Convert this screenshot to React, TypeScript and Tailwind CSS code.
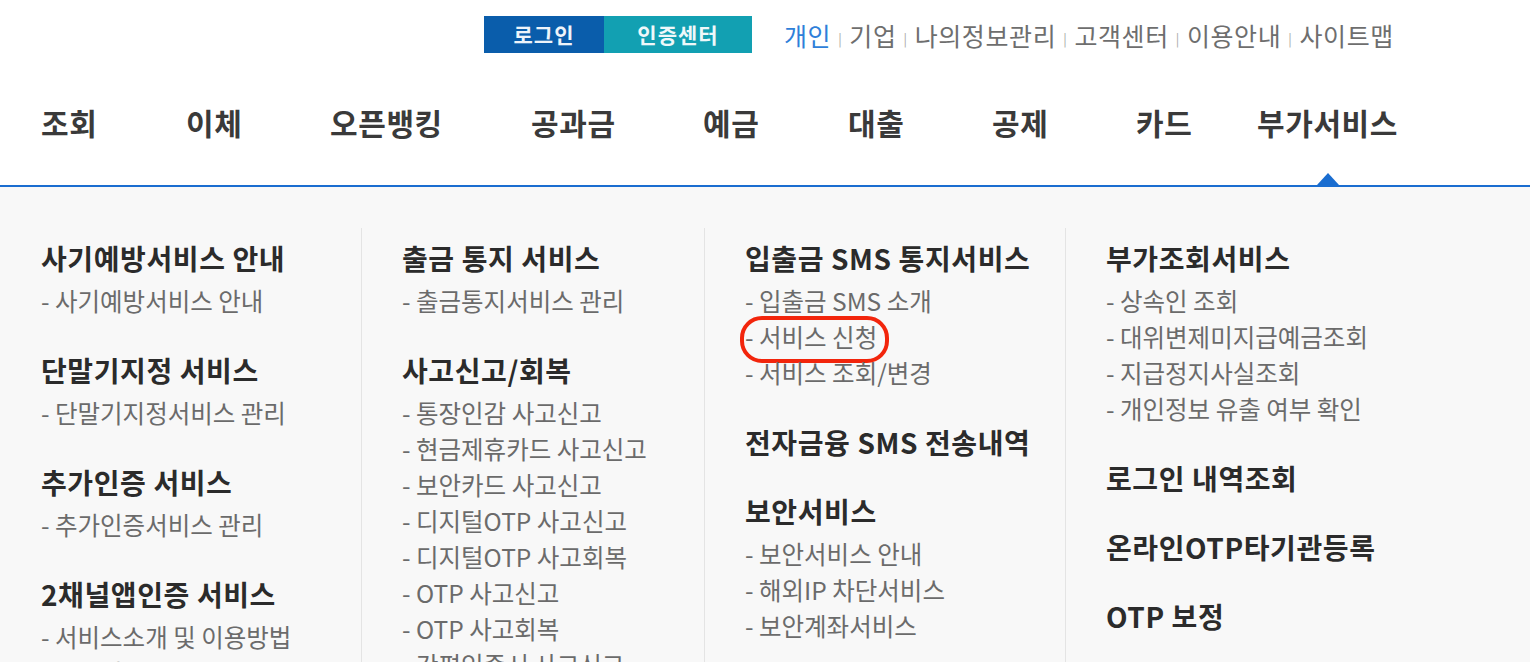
import React from "react";

const FONT = "font-['Noto_Sans_CJK_KR','Noto_Sans',sans-serif]";

type Group = { title: string; items: string[] };

const columns: Group[][] = [
  [
    { title: "사기예방서비스 안내", items: ["사기예방서비스 안내"] },
    { title: "단말기지정 서비스", items: ["단말기지정서비스 관리"] },
    { title: "추가인증 서비스", items: ["추가인증서비스 관리"] },
    { title: "2채널앱인증 서비스", items: ["서비스소개 및 이용방법", "채널인증 앱 및 등록방법"] },
  ],
  [
    { title: "출금 통지 서비스", items: ["출금통지서비스 관리"] },
    {
      title: "사고신고/회복",
      items: [
        "통장인감 사고신고",
        "현금제휴카드 사고신고",
        "보안카드 사고신고",
        "디지털OTP 사고신고",
        "디지털OTP 사고회복",
        "OTP 사고신고",
        "OTP 사고회복",
        "간편인증서 사고신고",
      ],
    },
  ],
  [
    { title: "입출금 SMS 통지서비스", items: ["입출금 SMS 소개", "서비스 신청", "서비스 조회/변경"] },
    { title: "전자금융 SMS 전송내역", items: [] },
    { title: "보안서비스", items: ["보안서비스 안내", "해외IP 차단서비스", "보안계좌서비스"] },
  ],
  [
    {
      title: "부가조회서비스",
      items: ["상속인 조회", "대위변제미지급예금조회", "지급정지사실조회", "개인정보 유출 여부 확인"],
    },
    { title: "로그인 내역조회", items: [] },
    { title: "온라인OTP타기관등록", items: [] },
    { title: "OTP 보정", items: [] },
  ],
];

const navItems: { label: string; w: string }[] = [
  { label: "조회", w: "w-[145px]" },
  { label: "이체", w: "w-[144px]" },
  { label: "오픈뱅킹", w: "w-[201px]" },
  { label: "공과금", w: "w-[172px]" },
  { label: "예금", w: "w-[145px]" },
  { label: "대출", w: "w-[144px]" },
  { label: "공제", w: "w-[144px]" },
  { label: "카드", w: "w-[121px]" },
];

const topLinks = ["기업", "나의정보관리", "고객센터", "이용안내", "사이트맵"];

function Column({ groups, first }: { groups: Group[]; first?: boolean }) {
  return (
    <div className={`${first ? "pl-[41px]" : "pl-[40px] border-l border-[#e4e4e4]"} pt-[12px] flex flex-col`}>
      {groups.map((g, gi) => (
        <div key={gi} className={gi > 0 ? "mt-[33px]" : ""}>
          <div className="text-[28px] leading-[36px] font-bold text-[#2b2b2b] whitespace-nowrap tracking-[0.6px]">
            {g.title}
          </div>
          {g.items.length > 0 && (
            <ul className="mt-[7px]">
              {g.items.map((it, ii) => (
                <li
                  key={ii}
                  className="relative text-[24.5px] leading-[36px] text-[#6b6b6b] whitespace-nowrap"
                >
                  - {it}
                  {it === "서비스 신청" && (
                    <span className="absolute left-[-5px] top-[-3px] w-[149px] h-[47px] rounded-[22px] border-[4px] border-[#f2250c]" />
                  )}
                </li>
              ))}
            </ul>
          )}
        </div>
      ))}
    </div>
  );
}

export default function App() {
  return (
    <div className={`${FONT} w-[1530px] h-[662px] overflow-hidden bg-white flex flex-col`}>
      {/* top utility bar */}
      <div className="shrink-0 pt-[16px] pl-[484px] flex items-center h-[53px]">
        <div className="flex h-[37px]">
          <div className="w-[120px] h-full bg-[#0a5dab] flex items-center justify-center text-[21px] font-bold tracking-[1px] text-[#eef4fa]">
            로그인
          </div>
          <div className="w-[148px] h-full bg-[#12a0b2] flex items-center justify-center text-[21px] font-bold tracking-[1px] text-[#eef8fa]">
            인증센터
          </div>
        </div>
        <div className="ml-[32px] flex items-center text-[25px] leading-[30px] tracking-[0.6px] text-[#6e6e6e]">
          <span className="text-[#2f7fd9]">개인</span>
          {topLinks.map((l) => (
            <React.Fragment key={l}>
              <span className="mx-[7px] mt-[8px] text-[13px] leading-none text-[#a8a8a8]">|</span>
              <span>{l}</span>
            </React.Fragment>
          ))}
        </div>
      </div>

      {/* main nav */}
      <div className="shrink-0 h-[134px] border-b-2 border-[#1a6dd0] flex items-start pl-[41px] pt-[49px]">
        {navItems.map((n) => (
          <div key={n.label} className={`${n.w} shrink-0 text-[30px] leading-[40px] font-bold tracking-[0.6px] text-[#3a3a3a] whitespace-nowrap`}>
            {n.label}
          </div>
        ))}
        <div className="relative shrink-0 text-[30px] leading-[40px] font-bold tracking-[0.6px] text-[#3a3a3a] whitespace-nowrap">
          부가서비스
          <span className="absolute left-1/2 -translate-x-1/2 top-[71px] w-0 h-0 border-l-[11px] border-r-[11px] border-b-[12px] border-l-transparent border-r-transparent border-b-[#1a6dd0]" />
        </div>
      </div>

      {/* dropdown panel */}
      <div className="flex-1 min-h-0 overflow-hidden bg-[#f8f8f8] pt-[41px]">
        <div className="grid grid-cols-[361px_343px_361px_1fr] h-[600px]">
          <Column groups={columns[0]} first />
          <Column groups={columns[1]} />
          <Column groups={columns[2]} />
          <Column groups={columns[3]} />
        </div>
      </div>
    </div>
  );
}
